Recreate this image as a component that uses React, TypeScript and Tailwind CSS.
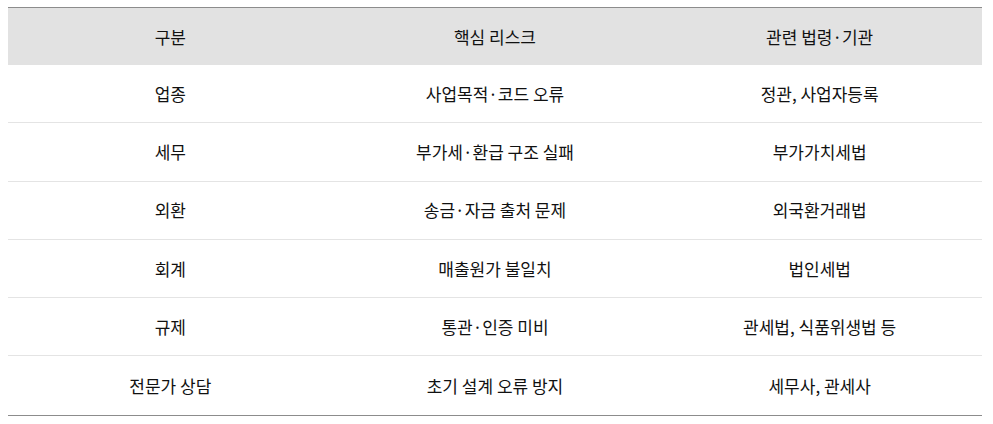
const rows = [
  ['업종', '사업목적·코드 오류', '정관, 사업자등록'],
  ['세무', '부가세·환급 구조 실패', '부가가치세법'],
  ['외환', '송금·자금 출처 문제', '외국환거래법'],
  ['회계', '매출원가 불일치', '법인세법'],
  ['규제', '통관·인증 미비', '관세법, 식품위생법 등'],
  ['전문가 상담', '초기 설계 오류 방지', '세무사, 관세사'],
];

export default function App() {
  return (
    <div className="min-h-[424px] bg-white pt-[7px] pl-2 font-['Noto_Sans_CJK_KR','Noto_Sans',sans-serif] text-[17px] text-[#111]">
      <div className="w-[974px] border-b border-[#8c8c8c]">
        <div className="grid h-[58px] grid-cols-3 items-center border-t border-[#8c8c8c] bg-[#e2e2e2] text-center">
          <div>구분</div>
          <div>핵심 리스크</div>
          <div>관련 법령·기관</div>
        </div>
        {rows.map((row, i) => (
          <div
            key={row[0]}
            className={
              'grid h-[58.3px] grid-cols-3 items-center text-center ' +
              (i < rows.length - 1 ? 'border-b border-[#e4e4e4]' : '')
            }
          >
            <div>{row[0]}</div>
            <div>{row[1]}</div>
            <div>{row[2]}</div>
          </div>
        ))}
      </div>
    </div>
  );
}
